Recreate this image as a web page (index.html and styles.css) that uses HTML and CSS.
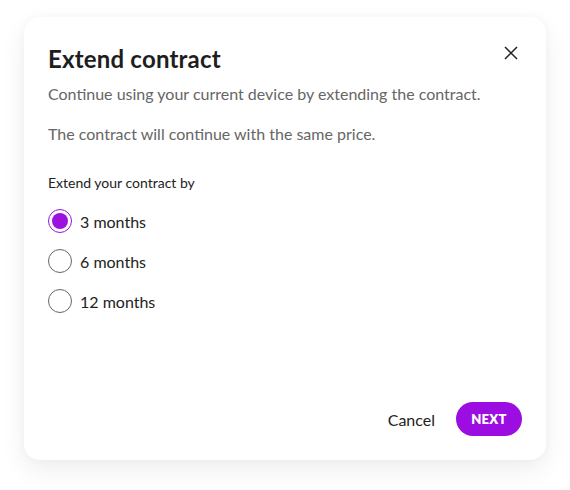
FILE: index.html
```html
<!DOCTYPE html>
<html>
<head>
<meta charset="utf-8">
<link rel="stylesheet" href="styles.css">
</head>
<body>
<div class="dialog">
  <div class="header">
    <h1 class="title">Extend contract</h1>
    <button class="close" aria-label="Close">
      <svg width="14" height="14" viewBox="0 0 14 14"><path d="M1 1L13 13M13 1L1 13" stroke="#222" stroke-width="1.5" fill="none"/></svg>
    </button>
  </div>
  <p class="text">Continue using your current device by extending the contract.</p>
  <p class="text second">The contract will continue with the same price.</p>
  <div class="group">
    <div class="label">Extend your contract by</div>
    <label class="option"><span class="radio checked"></span><span>3 months</span></label>
    <label class="option"><span class="radio"></span><span>6 months</span></label>
    <label class="option"><span class="radio"></span><span>12 months</span></label>
  </div>
  <div class="footer">
    <button class="cancel">Cancel</button>
    <button class="next">NEXT</button>
  </div>
</div>
</body>
</html>
```
FILE: styles.css
```css
html, body { margin: 0; padding: 0; background: #fff; }
body { font-family: Lato, "Noto Sans", sans-serif; color: #222; padding: 17px 24px 30px 24px; }
.dialog {
  width: 522px; height: 443px; box-sizing: border-box;
  background: #fff; border-radius: 16px;
  box-shadow: 0 10px 26px rgba(0,0,0,0.07), 0 0 8px rgba(0,0,0,0.03);
  padding: 28px 24px 24px 24px;
  display: flex; flex-direction: column;
}
.header { display: flex; justify-content: space-between; align-items: flex-start; }
.title { margin: 0; font-size: 24px; line-height: 28px; font-weight: 700; color: #1e1e1e; letter-spacing: 0.2px; }
.close { border: 0; background: none; padding: 0; margin: 1px 4px 0 0; width: 14px; height: 14px; display: flex; }
.text { margin: 9px 0 0 0; font-size: 16px; line-height: 24px; color: #666; }
.text.second { margin-top: 16px; }
.group { margin-top: 27px; display: flex; flex-direction: column; }
.label { font-size: 14px; line-height: 20px; color: #222; margin-bottom: 8px; }
.option { display: flex; align-items: center; gap: 8px; height: 40px; font-size: 16px; color: #222; }
.radio { width: 24px; height: 24px; box-sizing: border-box; border: 1.5px solid #666; border-radius: 50%; display: flex; align-items: center; justify-content: center; }
.radio.checked { border-color: #9b12e0; }
.radio.checked::after { content: ""; width: 16px; height: 16px; border-radius: 50%; background: #9b12e0; }
.footer { margin-top: auto; display: flex; justify-content: flex-end; align-items: center; gap: 21px; }
.cancel { border: 0; background: none; padding: 0; font-family: inherit; font-size: 16px; color: #222; }
.next { border: 0; background: #9b0de0; color: #fff; font-family: inherit; font-weight: 800; font-size: 13px; letter-spacing: 0.3px; height: 34px; width: 66px; border-radius: 17px; padding: 0; }
```
